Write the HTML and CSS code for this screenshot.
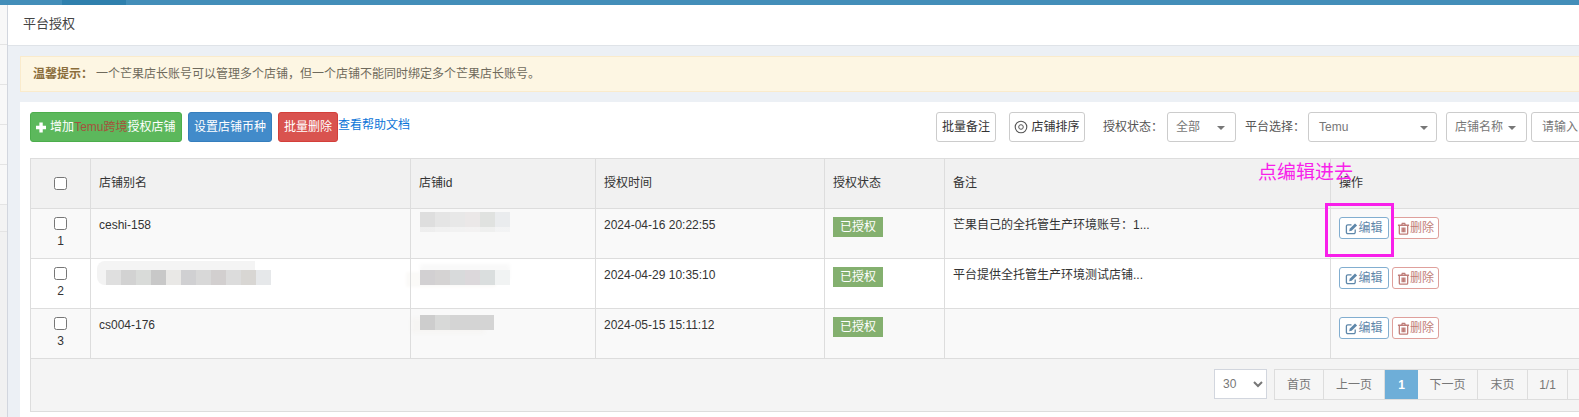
FILE: index.html
```html
<!DOCTYPE html>
<html lang="zh">
<head>
<meta charset="utf-8">
<title>平台授权</title>
<link rel="stylesheet" href="styles.css">
</head>
<body>
<div class="topbar"><span class="topbar-active"></span></div>
<div class="shell">
  <aside class="sidebar">
    <div class="side-item"></div><div class="side-item"></div><div class="side-item"></div><div class="side-item"></div><div class="side-item"></div><div class="side-item side-short"></div>
  </aside>
  <main class="main">
    <header class="page-head">平台授权</header>
    <section class="content">
      <div class="alert"><strong>温馨提示：</strong><span>一个芒果店长账号可以管理多个店铺，但一个店铺不能同时绑定多个芒果店长账号。</span></div>
      <div class="panel">
        <div class="toolbar">
          <a class="btn btn-green"><svg class="ico-plus" viewBox="0 0 12 12"><path d="M4 0h4v4h4v4H8v4H4V8H0V4h4z"/></svg>增加<span class="temu">Temu跨境</span>授权店铺</a>
          <a class="btn btn-blue">设置店铺币种</a>
          <a class="btn btn-red">批量删除</a>
          <a class="help">查看帮助文档</a>
          <a class="tool tool-note">批量备注</a>
          <a class="tool tool-sort"><svg class="ico-dot" viewBox="0 0 14 14"><circle cx="7" cy="7" r="5.800"/><circle class="dot-core" cx="7" cy="7" r="2.300"/></svg>店铺排序</a>
          <span class="field-label label-status">授权状态：</span>
          <div class="pick pick-status">全部<i class="caret"></i></div>
          <span class="field-label label-platform">平台选择：</span>
          <div class="pick pick-platform">Temu<i class="caret"></i></div>
          <div class="pick pick-name">店铺名称<i class="caret"></i></div>
          <div class="pick pick-input">请输入</div>
        </div>
        <div class="grid-wrap">
          <table class="grid">
            <colgroup><col class="c1"><col class="c2"><col class="c3"><col class="c4"><col class="c5"><col class="c6"><col class="c7"></colgroup>
            <thead>
              <tr><th class="center"><input type="checkbox"></th><th>店铺别名</th><th>店铺id</th><th>授权时间</th><th>授权状态</th><th>备注</th><th>操作</th></tr>
            </thead>
            <tbody>
              <tr>
                <td class="center"><input type="checkbox"><div class="num">1</div></td>
                <td class="txt">ceshi-158</td>
                <td class="blur-a"><div class="mosaic m-id1"></div></td>
                <td class="txt">2024-04-16 20:22:55</td>
                <td><span class="badge">已授权</span></td>
                <td class="txt">芒果自己的全托管生产环境账号：1...</td>
                <td class="ops">
                  <a class="op op-edit"><svg class="ico" viewBox="0 0 14 14"><path class="stroke" d="M11 8v3a1.500 1.500 0 0 1-1.500 1.500H3A1.500 1.500 0 0 1 1.500 11V4.500A1.500 1.500 0 0 1 3 3h4"/><path class="fill" d="M5 7.300 10.800 1.500l2.200 2.200-5.800 5.800-2.700.5z"/></svg>编辑</a><a class="op op-del"><svg class="ico" viewBox="0 0 14 14"><path class="stroke" d="M2.500 4v8a1 1 0 0 0 1 1h7a1 1 0 0 0 1-1V4M1 3.500h12M5 3.500 5.700 1.500h2.600L9 3.500M5.500 6v5M7 6v5M8.500 6v5"/></svg>删除</a>
                </td>
              </tr>
              <tr>
                <td class="center"><input type="checkbox"><div class="num">2</div></td>
                <td class="blur-n"><div class="mosaic m-name"></div></td>
                <td class="blur-b"><div class="mosaic m-id2"></div></td>
                <td class="txt">2024-04-29 10:35:10</td>
                <td><span class="badge">已授权</span></td>
                <td class="txt">平台提供全托管生产环境测试店铺...</td>
                <td class="ops">
                  <a class="op op-edit"><svg class="ico" viewBox="0 0 14 14"><path class="stroke" d="M11 8v3a1.500 1.500 0 0 1-1.500 1.500H3A1.500 1.500 0 0 1 1.500 11V4.500A1.500 1.500 0 0 1 3 3h4"/><path class="fill" d="M5 7.300 10.800 1.500l2.200 2.200-5.800 5.800-2.700.5z"/></svg>编辑</a><a class="op op-del"><svg class="ico" viewBox="0 0 14 14"><path class="stroke" d="M2.500 4v8a1 1 0 0 0 1 1h7a1 1 0 0 0 1-1V4M1 3.500h12M5 3.500 5.700 1.500h2.600L9 3.500M5.500 6v5M7 6v5M8.500 6v5"/></svg>删除</a>
                </td>
              </tr>
              <tr>
                <td class="center"><input type="checkbox"><div class="num">3</div></td>
                <td class="txt">cs004-176</td>
                <td class="blur-c"><div class="mosaic m-id3"></div></td>
                <td class="txt">2024-05-15 15:11:12</td>
                <td><span class="badge">已授权</span></td>
                <td></td>
                <td class="ops">
                  <a class="op op-edit"><svg class="ico" viewBox="0 0 14 14"><path class="stroke" d="M11 8v3a1.500 1.500 0 0 1-1.500 1.500H3A1.500 1.500 0 0 1 1.500 11V4.500A1.500 1.500 0 0 1 3 3h4"/><path class="fill" d="M5 7.300 10.800 1.500l2.200 2.200-5.800 5.800-2.700.5z"/></svg>编辑</a><a class="op op-del"><svg class="ico" viewBox="0 0 14 14"><path class="stroke" d="M2.500 4v8a1 1 0 0 0 1 1h7a1 1 0 0 0 1-1V4M1 3.500h12M5 3.500 5.700 1.500h2.600L9 3.500M5.500 6v5M7 6v5M8.500 6v5"/></svg>删除</a>
                </td>
              </tr>
            </tbody>
          </table>
          <div class="pager-bar">
            <select class="page-size"><option>30</option></select>
            <div class="pager">
              <a class="pg pg-first">首页</a><a class="pg pg-prev">上一页</a><a class="pg pg-cur">1</a><a class="pg pg-next">下一页</a><a class="pg pg-last">末页</a><a class="pg pg-count">1/1</a><a class="pg pg-more"></a>
            </div>
          </div>
        </div>
      </div>
    </section>
  </main>
</div>
<div class="note-text">点编辑进去</div>
<div class="note-box"></div>
</body>
</html>
```
FILE: styles.css
```css
* { box-sizing: border-box; }
html, body { height: 417px; overflow: hidden; }
body {
  margin: 0;
  width: 1579px;
  background: #fff;
  color: #333;
  font: 12px/18px "Liberation Sans", "Noto Sans CJK SC", sans-serif;
  position: relative;
}
a { color: inherit; text-decoration: none; }

.topbar { height: 5px; background: #438eb9; padding-left: 62px; }
.topbar-active { display: block; width: 64px; height: 5px; background: #2f80ad; }

.shell { display: flex; height: 412px; }
.sidebar { width: 8px; flex: none; background: #f1f1f1; border-right: 1px solid #d2d6de; }
.side-item { height: 40px; background: #f8f8f8; border-bottom: 1px solid #e4e4e4; }
.side-short { height: 27px; background: #f3f3f3; }

.main { flex: none; width: 1700px; background: #ecf0f5; }
.page-head {
  height: 41px;
  padding: 10px 15px 0;
  background: #fff;
  border-bottom: 1px solid #dfe3e8;
  font-size: 13px;
  color: #444;
}
.content { padding: 10px 0 0 12px; }
.alert {
  height: 36px;
  padding: 8px 12px;
  background: #fdf6e3;
  border: 1px solid #faebcc;
  color: #6f6a5c;
  display: flex;
  margin-bottom: 10px;
}
.alert strong { color: #8a6d3b; width: 63px; }

.panel { background: #fff; padding: 10px; height: 315px; }
.toolbar { display: flex; align-items: center; height: 30px; margin-bottom: 16px; white-space: nowrap; }
.btn {
  display: flex;
  align-items: center;
  height: 30px;
  border-radius: 3px;
  border: 1px solid transparent;
  color: #fff;
  padding: 0 5px;
}
.btn-green { width: 151.500px; background: #5cb85c; border-color: #4cae4c; }
.temu { color: #a4533d; }
.ico-plus { width: 11px; height: 11px; margin-right: 4px; fill: #fff; }
.btn-blue { width: 84px; margin-left: 6.500px; background: #428bca; border-color: #357ebd; justify-content: center; padding: 0; }
.btn-red { width: 60px; margin-left: 6px; background: #d9534f; border-color: #d43f3a; justify-content: center; padding: 0; }
.help { color: #0d75d8; width: 72px; margin-top: -4px; }
.tool {
  display: flex;
  align-items: center;
  justify-content: center;
  height: 30px;
  border: 1px solid #ccc;
  border-radius: 3px;
  background: #fff;
  color: #333;
}
.tool-note { width: 60px; margin-left: 526px; }
.tool-sort { width: 76px; margin-left: 13px; }
.ico-dot { width: 14px; height: 14px; margin-right: 3px; fill: none; stroke: #555; stroke-width: 1.100; }
.dot-core { stroke-width: 1; }
.field-label { color: #555; }
.label-status { width: 53px; margin-left: 18px; }
.label-platform { width: 53px; margin-left: 9px; }
.pick {
  position: relative;
  height: 30px;
  border: 1px solid #ccc;
  border-radius: 3px;
  background: #fff;
  color: #777;
  padding: 5px 8px;
}
.pick-status { width: 69px; margin-left: 11px; }
.pick-platform { width: 129px; margin-left: 10px; padding-left: 10px; }
.pick-name { width: 81px; margin-left: 9px; }
.pick-input { width: 149px; margin-left: 4px; padding-left: 10px; }
.caret {
  position: absolute;
  right: 11px;
  top: 13px;
  border-left: 4px solid transparent;
  border-right: 4px solid transparent;
  border-top: 4px solid #777;
}
.pick-status .caret { right: 10px; }
.pick-platform .caret { right: 8px; }
.pick-name .caret { right: 10px; }

.grid-wrap { width: 1650px; }
.grid { border-collapse: collapse; table-layout: fixed; width: 100%; }
.c1 { width: 60px; } .c2 { width: 320px; } .c3 { width: 185px; } .c4 { width: 229px; }
.c5 { width: 120px; } .c6 { width: 386px; } .c7 { width: 350px; }
.grid th, .grid td { border: 1px solid #ddd; padding: 8px; vertical-align: top; text-align: left; height: 50px; }
.grid th { background: #f1f1f1; font-weight: normal; vertical-align: middle; padding-bottom: 10px; }
.grid th.center { padding-bottom: 8px; }
.grid td.txt { padding-top: 7px; }
.grid tbody tr:nth-child(odd) td { background: #f9f9f9; }
.grid .center { text-align: center; }
.grid input { margin: 0 auto; width: 13px; height: 13px; display: block; }
.num { line-height: 14px; margin-top: 4px; }
.grid td.blur-a { padding: 3px 0 0 9px; }
.grid td.blur-b { padding: 11px 0 0 9px; }
.grid td.blur-c { padding: 6px 0 0 9px; }
.grid td.blur-n { padding: 2px 0 0 6px; }
.mosaic { height: 15px; }
.m-id1 {
  width: 90px;
  height: 20px;
  background:
    linear-gradient(#0000 15px, #f8f8f8a0 15px),
    linear-gradient(90deg, #dedede 15px, #e5e5e5 15px 30px, #e8e8e8 30px 45px, #ebe8e8 45px 60px, #e0e2e0 60px 75px, #eaecee 75px);
}
.m-name {
  width: 174px;
  height: 24px;
  border-radius: 8px 0 0 8px;
  background:
    linear-gradient(#f4f4f4, #f4f4f4) 0 0 / 158px 9px no-repeat,
    linear-gradient(#f3f3f3, #f3f3f3) 0 0 / 9px 100% no-repeat,
    linear-gradient(90deg, #f3f3f3 9px, #dfdfdf 9px 24px, #d2d2d2 24px 39px, #d9dbd9 39px 54px, #c8c8c8 54px 69px, #e9e8e6 69px 84px, #d0d0d2 84px 99px, #d8d8d8 99px 114px, #d2cfcf 114px 129px, #dcdcdc 129px 144px, #d8d6d3 144px 159px, #e6e8ea 159px) 0 9px / 100% 15px no-repeat;
}
.m-id2 {
  width: 90px;
  background: linear-gradient(90deg, #d2d0d2 15px, #d5d3d3 15px 30px, #d8dadb 30px 45px, #dcd8db 45px 60px, #dadede 60px 75px, #f1f3f3 75px);
  box-shadow: 0 -6px 4px #f9f9f9, -14px 2px 3px #fbfaf8;
}
.m-id3 {
  width: 74px;
  background: linear-gradient(90deg, #cdcdcd 15px, #d8d9d8 15px 30px, #d4d4d4 30px);
  box-shadow: -9px 3px 4px #f6f5f3;
}
.badge {
  display: block;
  width: 50px;
  height: 20px;
  background: #84b06f;
  color: #fff;
  text-align: center;
  line-height: 20px;
}
.grid td.ops { padding: 8px 8px 0; white-space: nowrap; }
.op {
  display: inline-flex;
  align-items: center;
  justify-content: center;
  height: 22px;
  border: 1px solid;
  border-radius: 3px;
  vertical-align: top;
}
.op-edit { width: 50px; border-color: #82aed0; color: #5e87aa; background: #fff; }
.op-del { width: 47px; margin-left: 3px; border-color: #dfa09c; color: #bf7d78; background: #fff; }
.ico { width: 13px; height: 13px; }
.stroke { fill: none; stroke-width: 1.400; }
.op-edit .stroke { stroke: #5e87aa; }
.op-edit .fill { fill: #5e87aa; }
.op-del .stroke { stroke: #bf7d78; }

.pager-bar {
  height: 53px;
  background: #f4f4f4;
  border: 1px solid #ddd;
  border-top: 0;
  display: flex;
  justify-content: flex-end;
  align-items: flex-start;
  padding: 10px 71px 0 0;
}
.page-size {
  width: 53px;
  height: 30px;
  margin-right: 7px;
  border: 1px solid #d2d6de;
  background: #fff;
  color: #777;
  font: 12px "Liberation Sans", sans-serif;
  padding-left: 4px;
}
.pager { display: flex; height: 31px; border: 1px solid #ddd; border-right: 0; background: #f6f6f6; }
.pg { display: flex; align-items: center; justify-content: center; border-right: 1px solid #ddd; color: #777; }
.pg-first { width: 49px; }
.pg-prev { width: 61px; }
.pg-cur { width: 33px; background: #6eaed8; color: #fff; border-right: 0; font-weight: bold; }
.pg-next { width: 60px; }
.pg-last { width: 50px; }
.pg-count { width: 40px; }
.pg-more { width: 40px; }

.note-text {
  position: absolute;
  left: 1258px;
  top: 161px;
  font-size: 19px;
  line-height: 24px;
  color: #f81fea;
  white-space: nowrap;
}
.note-box {
  position: absolute;
  left: 1325px;
  top: 203px;
  width: 69px;
  height: 54px;
  border: 3px solid #f81fea;
}
```
